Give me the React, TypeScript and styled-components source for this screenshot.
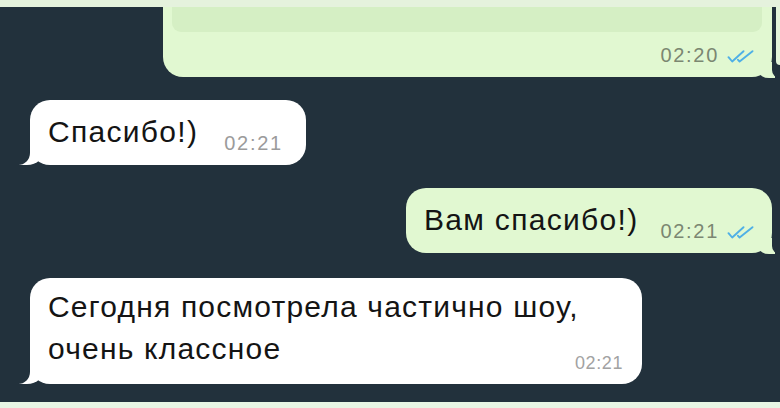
import React from "react";
import styled, { createGlobalStyle, css } from "styled-components";

const DARK = "#22313c";
const GREEN = "#e1f8d1";
const WHITE = "#ffffff";

const GlobalStyle = createGlobalStyle`
  html, body { margin: 0; padding: 0; }
  body {
    width: 780px;
    height: 408px;
    overflow: hidden;
    background: ${DARK};
    font-family: "Liberation Sans", Arial, Helvetica, sans-serif;
    -webkit-font-smoothing: antialiased;
  }
`;

const Screen = styled.div`
  width: 780px;
  height: 408px;
  display: flex;
  flex-direction: column;
  overflow: hidden;
  background: ${DARK};
`;

const EdgeStrip = styled.div<{ $h: number; $c: string }>`
  flex: none;
  height: ${(p) => p.$h}px;
  background: ${(p) => p.$c};
`;

const Chat = styled.div`
  flex: 1;
  min-height: 0;
  display: flex;
  flex-direction: column;
  padding: 0 8px;
  overflow: hidden;
`;

const Row = styled.div<{ $out?: boolean; $gap: number }>`
  display: flex;
  align-items: flex-start;
  justify-content: ${(p) => (p.$out ? "flex-end" : "flex-start")};
  margin-top: ${(p) => p.$gap}px;
  padding-left: ${(p) => (p.$out ? 0 : 22)}px;
  flex: none;
`;

const tailIn = css`
  &::before {
    content: "";
    position: absolute;
    bottom: 0;
    left: -11px;
    width: 26px;
    height: 22px;
    background: ${WHITE};
    border-bottom-right-radius: 18px 16px;
  }
  &::after {
    content: "";
    position: absolute;
    bottom: 0;
    left: -30px;
    width: 30px;
    height: 24px;
    background: ${DARK};
    border-bottom-right-radius: 12px;
  }
`;

const tailOut = css`
  &::before {
    content: "";
    position: absolute;
    bottom: -1px;
    right: -3px;
    width: 18px;
    height: 16px;
    background: ${GREEN};
    border-bottom-left-radius: 12px 10px;
  }
  &::after {
    content: "";
    position: absolute;
    bottom: -1px;
    right: -10px;
    width: 10px;
    height: 18px;
    background: ${DARK};
    border-bottom-left-radius: 8px;
  }
`;

const Bubble = styled.div<{ $out?: boolean; $width?: number; $top?: number }>`
  position: relative;
  flex: none;
  width: ${(p) => (p.$width ? `${p.$width}px` : "auto")};
  margin-top: ${(p) => p.$top ?? 0}px;
  background: ${(p) => (p.$out ? GREEN : WHITE)};
  border-radius: 20px;
  ${(p) => (p.$out ? tailOut : tailIn)}
`;

const Line = styled.div<{ $out?: boolean }>`
  position: relative;
  z-index: 1;
  display: flex;
  align-items: flex-end;
  padding: 15px ${(p) => (p.$out ? 17 : 23)}px 16px 18px;
`;

const Text = styled.span`
  font-size: 30px;
  line-height: 34px;
  letter-spacing: 1.3px;
  color: #141414;
  white-space: nowrap;
`;

const Time = styled.span<{ $out?: boolean }>`
  display: flex;
  align-items: flex-end;
  gap: 8px;
  margin-left: ${(p) => (p.$out ? 22 : 26)}px;
  margin-bottom: -5px;
  font-size: 20px;
  line-height: 21px;
  letter-spacing: 1.7px;
  color: ${(p) => (p.$out ? "#7b8771" : "#9b9b9b")};
  white-space: nowrap;
`;

const Ticks = styled.svg`
  flex: none;
  width: 28px;
  height: 13px;
  margin-bottom: 3px;
`;

const Quote = styled.div`
  position: relative;
  z-index: 1;
  height: 56px;
  margin: 9px 10px 0 9px;
  border-radius: 9px;
  background: #d5efc4;
`;

const Footer = styled.div`
  position: relative;
  z-index: 1;
  display: flex;
  justify-content: flex-end;
  padding: 13px 17px 16px 0;
`;

const Sliver = styled.div`
  flex: none;
  position: relative;
  z-index: 2;
  width: 4px;
  height: 58px;
  margin-left: 4px;
  margin-right: -8px;
  background: #e3f5da;
  border-bottom-left-radius: 4px;
`;

const Stack = styled.div`
  position: relative;
  z-index: 1;
  display: grid;
  padding: 8px 19px 14px 18px;
  & > * {
    grid-area: 1 / 1;
  }
`;

const WrapText = styled.div`
  font-size: 30px;
  line-height: 42px;
  letter-spacing: 1.2px;
  color: #141414;
`;

const CornerTime = styled.span`
  justify-self: end;
  align-self: end;
  margin-bottom: -3px;
  font-size: 18px;
  line-height: 20px;
  letter-spacing: 0.6px;
  color: #a2a2a2;
`;

const DoubleCheck = () => (
  <Ticks viewBox="0 0 28 13" fill="none" stroke="#4fb0e6" strokeWidth="1.9" strokeLinecap="round" strokeLinejoin="round">
    <path d="M1.5 7.2 L5.2 11.5 L16.5 1.2" />
    <path d="M11 9.8 L12.6 11.5 L25.5 1.2" />
  </Ticks>
);

export default function App() {
  return (
    <Screen>
      <GlobalStyle />
      <EdgeStrip $h={7} $c="#e5f2dd" />
      <Chat>
        <Row $out $gap={0}>
          <Bubble $out $width={609} $top={-40}>
            <Quote />
            <Footer>
              <Time $out>
                02:20
                <DoubleCheck />
              </Time>
            </Footer>
          </Bubble>
          <Sliver />
        </Row>
        <Row $gap={23}>
          <Bubble>
            <Line>
              <Text>Спасибо!)</Text>
              <Time>02:21</Time>
            </Line>
          </Bubble>
        </Row>
        <Row $out $gap={23}>
          <Bubble $out>
            <Line $out>
              <Text>Вам спасибо!)</Text>
              <Time $out>
                02:21
                <DoubleCheck />
              </Time>
            </Line>
          </Bubble>
        </Row>
        <Row $gap={25}>
          <Bubble $width={612}>
            <Stack>
              <WrapText>Сегодня посмотрела частично шоу, очень классное</WrapText>
              <CornerTime>02:21</CornerTime>
            </Stack>
          </Bubble>
        </Row>
      </Chat>
      <EdgeStrip $h={6} $c="#e8f6e4" />
    </Screen>
  );
}
